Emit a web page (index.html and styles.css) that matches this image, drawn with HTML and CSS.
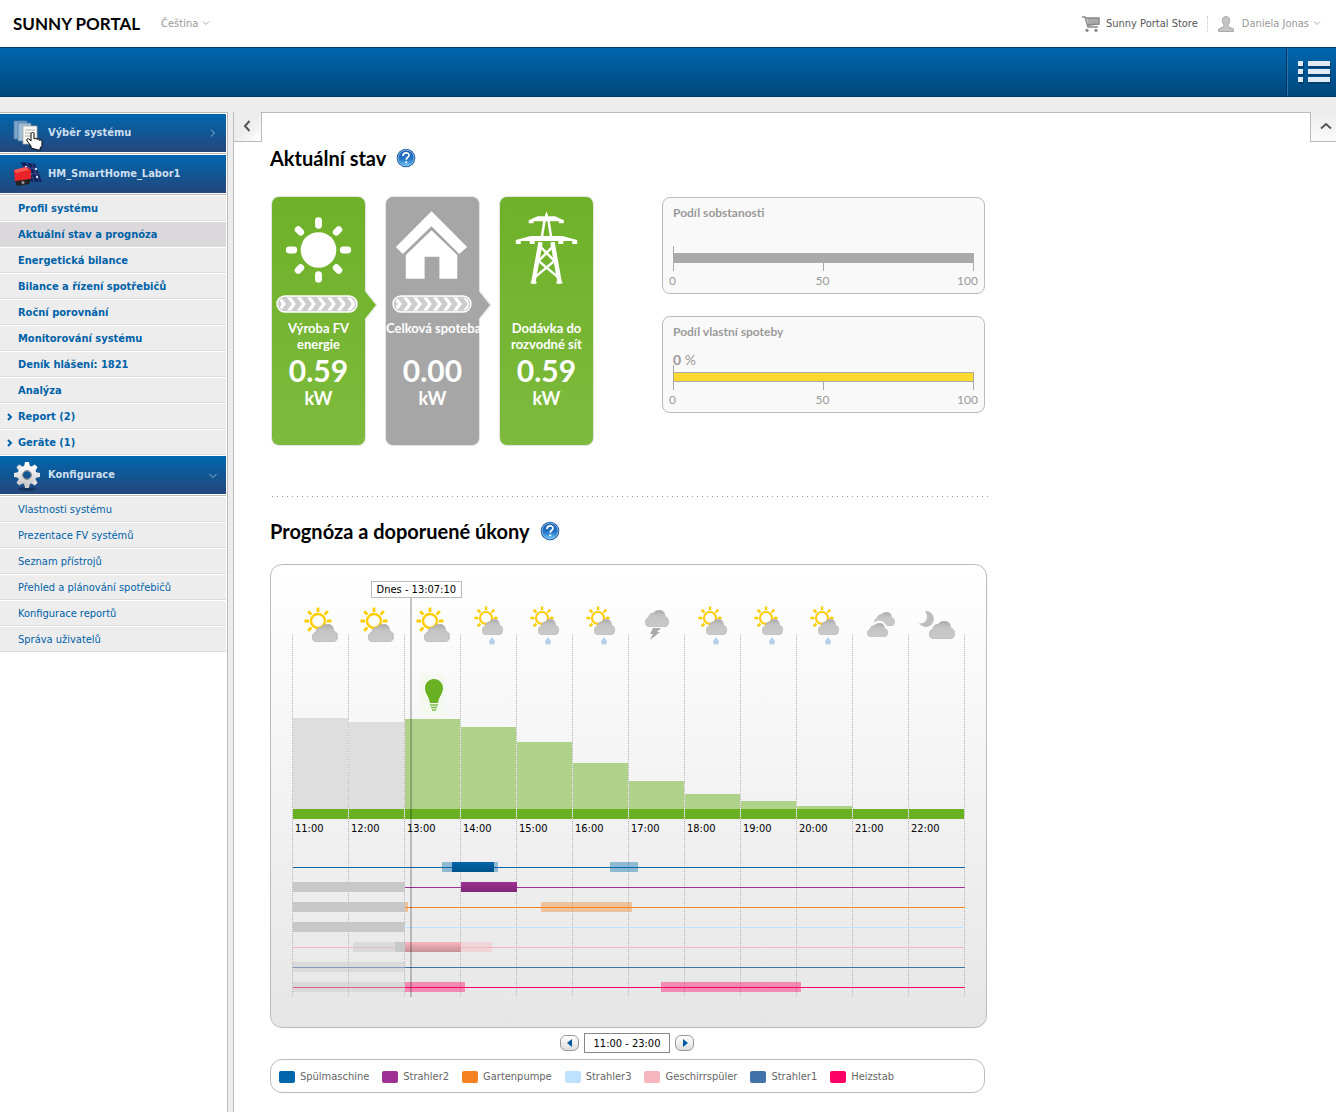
FILE: index.html
```html
<!DOCTYPE html>
<html lang="cs">
<head>
<meta charset="utf-8">
<meta name="viewport" content="width=device-width, initial-scale=1">
<title>Sunny Portal</title>
<link rel="stylesheet" href="styles.css">
</head>
<body>
<svg class="defs" aria-hidden="true">
  <defs>
    <linearGradient id="cloud-fill" x1="0" y1="0" x2="0" y2="1"><stop offset="0" stop-color="#ababab"/><stop offset=".35" stop-color="#c4c4c4"/><stop offset="1" stop-color="#cacaca"/></linearGradient>
    <linearGradient id="help-fill" x1="0" y1="0" x2="0" y2="1"><stop offset="0" stop-color="#1d5fb0"/><stop offset=".55" stop-color="#2273c4"/><stop offset="1" stop-color="#6cc3f5"/></linearGradient>
    <linearGradient id="gear-fill" x1="0" y1="0" x2="0" y2="1"><stop offset="0" stop-color="#fff"/><stop offset="1" stop-color="#c9c9c9"/></linearGradient>
    <symbol id="cloud" viewBox="0 0 26 18" preserveAspectRatio="none"><path fill="url(#cloud-fill)" stroke="#aaa" stroke-width=".6" d="M5 17.700C2 17.700.3 16 .3 13 .3 10.500 2 8.500 4 8 4 5 6.500 3 9 3.500 10.500 1.500 12.500.3 15.500.3 19.500.3 22 3 21.500 7 24 7.500 25.700 9.500 25.700 12.500 25.700 15.500 24 17.700 21 17.700Z"/></symbol>
    <symbol id="sun" viewBox="-14 -14 28 28"><g fill="none" stroke="#ffcd00" stroke-width="2.400"><circle r="7"/><path stroke-width="2.800" d="M0-13.500V-9M0 9V13.500M-13.500 0H-9M9 0H13.500M-9.800-9.800-6.600-6.600M9.800-9.800 6.600-6.600M-9.800 9.800-6.600 6.600M9.800 9.800 6.600 6.600"/></g></symbol>
    <symbol id="w-partly" viewBox="0 0 56 44"><use href="#sun" x="12" y="4" width="28" height="28"/><use href="#cloud" x="20" y="21" width="26" height="18"/></symbol>
    <symbol id="w-shower" viewBox="0 0 56 44"><use href="#sun" x="14" y="3" width="24" height="24"/><use href="#cloud" x="22" y="16" width="21" height="16"/><path fill="#b5d2ea" d="M32 34c1 2 3 3 3 5a3 2.600 0 0 1-6 0c0-2 2-3 3-5z"/></symbol>
    <symbol id="w-storm" viewBox="0 0 56 44"><use href="#cloud" x="17" y="7" width="24" height="17"/><path fill="#aaa" d="M25 25h8l-4 4h3l-10 8 3-6h-3z"/></symbol>
    <symbol id="w-cloudy" viewBox="0 0 56 44"><use href="#cloud" x="22" y="9" width="21" height="14"/><path fill="#fafafa" d="M20 22c2-4 10-7 14 0l4 3v4H20z"/><use href="#cloud" x="15" y="20" width="21" height="14"/></symbol>
    <symbol id="w-night" viewBox="0 0 56 44"><path fill="#bdbdbd" d="M17 8a8 8 0 1 1-6 12c6 2 11-5 6-12z"/><use href="#cloud" x="21" y="18" width="26" height="18"/></symbol>
    <symbol id="help" viewBox="0 0 20 20"><circle cx="10" cy="10" r="9.300" fill="#1c58a0"/><circle cx="10" cy="10" r="8" fill="url(#help-fill)" stroke="#9cc9ee" stroke-width=".8"/><path fill="none" stroke="#fff" stroke-width="1.700" d="M7 8c0-4 6-4 6-.8 0 2-2.800 2.200-2.800 4.600"/><circle cx="10.200" cy="14.300" r="1.100" fill="#fff"/></symbol>
    <pattern id="chevrons" y="2.500" width="10" height="13" patternUnits="userSpaceOnUse"><path fill="#fff" d="M1 0h4l5 6.500L5 13H1l5-6.500z"/></pattern>
  </defs>
</svg>

<header class="top">
  <a class="logo" href="#">SUNNY PORTAL</a>
  <button class="drop" type="button">Čeština <svg width="8" height="5" viewBox="0 0 8 5"><path d="M1 .5 4 3.500 7 .5"/></svg></button>
  <nav class="top-links">
    <a class="store" href="#"><svg width="18" height="16" viewBox="0 0 18 16"><path fill="#aaa" d="M5 2h12v6L6 10z"/><path fill="none" stroke="#888" stroke-width="1.500" d="M0 1h3l3 10h10M5.500 9 17 8V2H4"/><circle cx="5" cy="14.300" r="1.600" fill="#888"/><circle cx="14" cy="14.300" r="1.600" fill="#888"/></svg>Sunny Portal Store</a>
    <button class="drop user" type="button"><svg class="person" width="16" height="16" viewBox="0 0 16 16"><path fill="#c4c4c4" stroke="#aaa" d="M.5 15.500v-2.500l5.500-2.500V9C4.500 7 4 5 4.500 3 5-.2 11-.2 11.500 3c.5 2 0 4-1.500 6v1.500l5.500 2.500v2.500z"/></svg>Daniela Jonas <svg width="8" height="5" viewBox="0 0 8 5"><path d="M1 .5 4 3.500 7 .5"/></svg></button>
  </nav>
</header>
<div class="bar">
  <button class="bar-menu" type="button" aria-label="Menu"><svg width="34" height="24" viewBox="0 0 34 24"><path fill="#013e70" d="M2 3h5v5H2zM12 3h22v5H12zM2 11h5v5H2zM12 11h22v5H12zM2 19h5v5H2zM12 19h22v5H12z"/><path fill="#dfeaf5" d="M1 1h5v5H1zM11 1h22v5H11zM1 9h5v5H1zM11 9h22v5H11zM1 17h5v5H1zM11 17h22v5H11z"/></svg></button>
</div>

<div class="body">
  <nav class="side">
    <a class="head" href="#"><svg width="36" height="36" viewBox="0 0 36 36"><g stroke="#4d7ca8" stroke-width=".8"><path fill="#7da6c9" d="M5 6h13v18H5z"/><path fill="#9fbdd5" d="M9 8h13v18H9z"/><path fill="#fafaf5" stroke="#aaa" d="M14 11h14v18H14z"/></g><path stroke="#aaa" d="M16 15h10M16 18h10M16 21h8"/><path fill="#fff" stroke="#000" d="M22 33v-2l-4-5c-1-2 1-3 2-2l2 2v-7c0-2 3-2 3 0v5c1-1 3-1 3 .5 1-1 2.500-.5 2.500.8 1-.8 2.500 0 2.500 1.200v4l-2 3v2z"/></svg><span>Výběr systému</span><svg class="head-arrow" width="8" height="8" viewBox="0 0 8 8"><path d="M2 .5 5.500 4 2 7.500"/></svg></a>
    <a class="head" href="#"><svg width="36" height="36" viewBox="0 0 36 36"><path fill="#15235c" d="M12 6l14 2 7 18-15-1z"/><path stroke="#4d62a8" stroke-width=".6" fill="none" d="M13 11l15 2M15 17l15 1M18 7l7 18M23 8l7 17"/><circle cx="17" cy="11" r="1.200" fill="#cfe2ff"/><circle cx="27" cy="13" r="1.200" fill="#cfe2ff"/><circle cx="28" cy="21" r="1.200" fill="#cfe2ff"/><path fill="#e8232a" d="M5 14l12-3 5 3v9l-16 3z"/><path fill="#f55" d="M5 14l12-3 3 3-13 3z"/><path fill="#222" d="M6 25l16-2-2 5-12 2z"/><circle cx="14" cy="26.500" r="1.500" fill="#999"/></svg><span>HM_SmartHome_Labor1</span></a>
    <ul class="menu strong">
      <li><a href="#">Profil systému</a></li>
      <li class="on"><a href="#">Aktuální stav a prognóza</a></li>
      <li><a href="#">Energetická bilance</a></li>
      <li><a href="#">Bilance a řízení spotřebičů</a></li>
      <li><a href="#">Roční porovnání</a></li>
      <li><a href="#">Monitorování systému</a></li>
      <li><a href="#">Deník hlášení: 1821</a></li>
      <li><a href="#">Analýza</a></li>
      <li class="sub"><a href="#"><svg width="6" height="8" viewBox="0 0 6 8"><path d="M1 1l3 3-3 3"/></svg>Report (2)</a></li>
      <li class="sub"><a href="#"><svg width="6" height="8" viewBox="0 0 6 8"><path d="M1 1l3 3-3 3"/></svg>Geräte (1)</a></li>
    </ul>
    <a class="head" href="#"><svg width="36" height="36" viewBox="-18 -18 36 36"><ellipse cy="14" rx="9" ry="2" fill="#153560"/><g fill="url(#gear-fill)"><path id="teeth" d="M-2-13h4l1 5h-6zM-2 13h4l1-5h-6zM-13-2v4l5 1v-6zM13-2v4l-5 1v-6z"/><use href="#teeth" transform="rotate(45)"/><path fill-rule="evenodd" d="M0-9.500a9.500 9.500 0 1 0 .1 0zM0-4a4 4 0 1 1-.1 0z"/></g><circle r="4.500" fill="none" stroke="#888"/></svg><span>Konfigurace</span><svg class="head-arrow" width="8" height="8" viewBox="0 0 8 8"><path d="M.5 3 4 6.500 7.500 3"/></svg></a>
    <ul class="menu">
      <li><a href="#">Vlastnosti systému</a></li>
      <li><a href="#">Prezentace FV systémů</a></li>
      <li><a href="#">Seznam přístrojů</a></li>
      <li><a href="#">Přehled a plánování spotřebičů</a></li>
      <li><a href="#">Konfigurace reportů</a></li>
      <li><a href="#">Správa uživatelů</a></li>
    </ul>
  </nav>

  <main class="content">
    <button class="tab tab-left" type="button" aria-label="Skrýt menu"><svg width="8" height="12" viewBox="0 0 8 12"><path d="M6.500 1 2 6l4.500 5"/></svg></button>
    <button class="tab tab-right" type="button" aria-label="Nahoru"><svg width="12" height="8" viewBox="0 0 12 8"><path d="M1 6.500 6 2l5 4.500"/></svg></button>

    <div class="column">
      <h1>Aktuální stav <a href="#" aria-label="Nápověda"><svg width="20" height="20"><use href="#help"/></svg></a></h1>

      <section class="status">
        <article class="card green">
          <svg class="picture" width="94" height="96" viewBox="0 0 94 96"><g fill="#fff"><circle cx="47" cy="53" r="18"/><g stroke="#fff" stroke-width="7" stroke-linecap="round"><path d="M47 23.500v4.500M47 78v4.500M17.500 53H22M72 53h4.500M26.500 32.500l2.500 2.500M67.500 32.500 65 35M26.500 73.500l2.500-2.500M67.500 73.500 65 71"/></g></g></svg>
          <svg class="flow" width="82" height="18" viewBox="0 0 82 18"><rect x="1" y="1" width="80" height="16" rx="8" fill="#ccc"/><rect x="3" y="2.500" width="76" height="13" rx="6" fill="url(#chevrons)"/><rect x="1" y="1" width="80" height="16" rx="8" fill="none" stroke="#fff" stroke-width="1.400"/></svg>
          <h2>Výroba FV<br>energie</h2>
          <p class="value">0.59</p><p class="unit">kW</p>
          <svg class="tip" width="14" height="30" viewBox="0 0 14 30"><path fill="#74b52e" d="M0 0 12 15 0 30z"/><path fill="none" stroke="#e4e4e4" d="M1 0 13 15 1 30"/></svg>
        </article>
        <article class="card grey">
          <svg class="picture" width="94" height="96" viewBox="0 0 94 96"><path fill="#fff" d="M46 14 82 50l-8 7L46 29 17 57l-7-7zM46 33l26 25v24H54V60H39v22H20V58z"/></svg>
          <svg class="flow" width="80" height="18" viewBox="0 0 80 18"><rect x="1" y="1" width="78" height="16" rx="8" fill="#ccc"/><rect x="3" y="2.500" width="74" height="13" rx="6" fill="url(#chevrons)"/><rect x="1" y="1" width="78" height="16" rx="8" fill="none" stroke="#fff" stroke-width="1.400"/></svg>
          <h2>Celková spoteba<br>&nbsp;</h2>
          <p class="value">0.00</p><p class="unit">kW</p>
          <svg class="tip" width="14" height="30" viewBox="0 0 14 30"><path fill="#a6a6a6" d="M0 0 12 15 0 30z"/><path fill="none" stroke="#e4e4e4" d="M1 0 13 15 1 30"/></svg>
        </article>
        <article class="card green">
          <svg class="picture" width="94" height="96" viewBox="0 0 94 96"><g fill="none" stroke="#fff" stroke-width="3"><path d="M45.500 20 42 42M48.500 20 52 42" stroke-width="2.500"/><path d="M41 45 33.500 87M53 45 60.500 87" stroke-width="4.500"/><path d="M41 50 55 64 36 80M53 50 39 64 58 80" stroke-width="2.500"/></g><path fill="#fff" d="M45.500 18l1.500-4 1.500 4v1h7l9 4v3h-5v-2H34v2h-5v-3l9-4h7.500zM31 39h32l15 4v4h-5v-3H64v3h-5v-3H35v3h-5v-3H21v3h-5v-4zM31 85h6v2h-6zM57 85h6v2h-6z"/></svg>
          <div class="flow-space"></div>
          <h2>Dodávka do<br>rozvodné sít</h2>
          <p class="value">0.59</p><p class="unit">kW</p>
        </article>

        <div class="gauges">
          <section class="gauge">
            <h3>Podíl sobstanosti</h3>
            <p class="percent"></p>
            <div class="track"></div>
            <div class="scale"><span>0</span><span>50</span><span>100</span></div>
          </section>
          <section class="gauge yellow">
            <h3>Podíl vlastní spoteby</h3>
            <p class="percent"><b>0</b> %</p>
            <div class="track"></div>
            <div class="scale"><span>0</span><span>50</span><span>100</span></div>
          </section>
        </div>
      </section>

      <hr>

      <h1>Prognóza a doporuené úkony <a href="#" aria-label="Nápověda"><svg width="20" height="20"><use href="#help"/></svg></a></h1>

      <section class="forecast">
        <div class="plot">
          <div class="lines"><i></i><i></i><i></i><i></i><i></i><i></i><i></i><i></i><i></i><i></i><i></i><i></i></div>
          <div class="layers">
            <div class="weather">
              <svg><use href="#w-partly"/></svg><svg><use href="#w-partly"/></svg><svg><use href="#w-partly"/></svg>
              <svg><use href="#w-shower"/></svg><svg><use href="#w-shower"/></svg><svg><use href="#w-shower"/></svg>
              <svg><use href="#w-storm"/></svg>
              <svg><use href="#w-shower"/></svg><svg><use href="#w-shower"/></svg><svg><use href="#w-shower"/></svg>
              <svg><use href="#w-cloudy"/></svg><svg><use href="#w-night"/></svg>
            </div>
            <div class="bars">
              <div class="past" style="--h:91"></div>
              <div class="past" style="--h:87"></div>
              <div style="--h:90"><svg class="bulb" width="24" height="40" viewBox="0 0 24 40"><path fill="#f4f9f0" d="M0 0h24v40H0z"/><path fill="#69b023" d="M13 4c-5 0-9 4-9 9 0 6 4 8 5 15h8c1-7 5-9 5-15 0-5-4-9-9-9z"/><path stroke="#7db94a" stroke-width="1.500" d="M9 30h8M10 32.500h6M11 35h4"/></svg></div>
              <div style="--h:82"></div>
              <div style="--h:67"></div>
              <div style="--h:46"></div>
              <div style="--h:28"></div>
              <div style="--h:15"></div>
              <div style="--h:8"></div>
              <div style="--h:3"></div>
              <div style="--h:0"></div>
              <div style="--h:0"></div>
            </div>
            <div class="hours"><span>11:00</span><span>12:00</span><span>13:00</span><span>14:00</span><span>15:00</span><span>16:00</span><span>17:00</span><span>18:00</span><span>19:00</span><span>20:00</span><span>21:00</span><span>22:00</span></div>
            <div class="lanes">
              <div class="lane c1"><i class="plan" style="--from:160;--for:60"></i><i class="run" style="--from:170;--for:45"></i><i class="plan" style="--from:340;--for:30"></i></div>
              <div class="lane c2"><i class="done" style="--from:0;--for:120"></i><i class="run" style="--from:180;--for:60"></i></div>
              <div class="lane c3"><i class="done" style="--from:0;--for:120"></i><i class="plan" style="--from:120;--for:3"></i><i class="plan" style="--from:266;--for:97"></i></div>
              <div class="lane c4"><i class="done" style="--from:0;--for:120"></i></div>
              <div class="lane c5"><i class="missed" style="--from:64;--for:45"></i><i class="done" style="--from:109;--for:11"></i><i class="run" style="--from:120;--for:60"></i><i class="plan" style="--from:180;--for:33"></i></div>
              <div class="lane c6"><i class="missed" style="--from:0;--for:120"></i></div>
              <div class="lane c7"><i class="missed" style="--from:0;--for:120"></i><i class="plan" style="--from:120;--for:64"></i><i class="plan" style="--from:394;--for:150"></i></div>
            </div>
          </div>
          <div class="now"><span>Dnes - 13:07:10</span></div>
        </div>
      </section>

      <div class="pager">
        <button type="button" aria-label="Předchozí"><svg width="6" height="8" viewBox="0 0 6 8"><path fill="#0058a0" d="M5 0v8L0 4z"/></svg></button>
        <input type="text" value="11:00 - 23:00" aria-label="Časový úsek" readonly>
        <button type="button" aria-label="Další"><svg width="6" height="8" viewBox="0 0 6 8"><path fill="#0058a0" d="M1 0v8l5-4z"/></svg></button>
      </div>

      <ul class="legend">
        <li class="c1">Spülmaschine</li><li class="c2">Strahler2</li><li class="c3">Gartenpumpe</li><li class="c4">Strahler3</li><li class="c5">Geschirrspüler</li><li class="c6">Strahler1</li><li class="c7">Heizstab</li>
      </ul>
    </div>
  </main>
</div>
</body>
</html>
```
FILE: styles.css
```css
* { box-sizing: border-box; }

body {
  margin: 0;
  min-height: 100vh;
  display: flex;
  flex-direction: column;
  background: #ededed;
  color: #000;
  font: 11px/16px "DejaVu Sans Condensed", "Noto Sans", sans-serif;
}

h1, h2, h3, p, ul { margin: 0; padding: 0; }
ul { list-style: none; }
a { color: inherit; text-decoration: none; }
svg { display: block; flex: none; }
button { margin: 0; padding: 0; border: 0; background: none; color: inherit; font: inherit; cursor: pointer; }
.defs { position: absolute; width: 0; height: 0; }

/* Top line */
.top {
  display: flex;
  align-items: center;
  height: 47px;
  padding: 0 15px 0 13px;
  background: #fff;
}
.logo { font: 700 17px/24px Lato, sans-serif; }
.drop { display: flex; align-items: center; gap: 4px; margin-left: 21px; color: #999; }
.drop svg { fill: none; stroke: #aaa; }
.top-links { display: flex; align-items: center; margin-left: auto; }
.store { display: flex; align-items: center; gap: 6px; padding-right: 9px; border-right: 1px dotted #ccc; color: #555; }
.user { margin-left: 10px; }
.user .person { margin-right: 4px; }

/* Blue bar */
.bar {
  display: flex;
  justify-content: flex-end;
  height: 50px;
  border: solid #003e6e;
  border-width: 1px 0;
  background: linear-gradient(#0067ae, #00477c);
}
.bar-menu { width: 50px; padding-left: 10px; border-left: 1px solid #00335c; box-shadow: inset 1px 0 #2476b3; }

/* Columns under the bar */
.body { flex: 1; display: grid; grid-template-columns: 228px 1fr; column-gap: 5px; padding-top: 15px; }

.side { border: solid #bbb; border-width: 1px 1px 0 0; padding-right: 1px; background: #fff; }
.head {
  display: flex;
  align-items: center;
  height: 40px;
  margin-top: 1px;
  padding: 0 9px 2px;
  border-bottom: 1px solid #bbb;
  background: linear-gradient(#0067ae, #24467b) 0 0 / 100% 38px no-repeat;
  color: #cddfee;
  font-weight: 700;
}
.head span { flex: 1; padding-left: 3px; }
.head-arrow { fill: none; stroke: #8db4d6; }
.menu li { height: 26px; border: solid #fff; border-width: 1px 0 0; background: #ededed; box-shadow: inset 0 -1px #ddd; }
.menu .on { background: #dad8da; }
.menu a { display: flex; align-items: center; height: 26px; padding-left: 18px; color: #0062a8; }
.menu .sub a { padding-left: 7px; gap: 5px; }
.menu .sub svg { fill: none; stroke: #0062a8; stroke-width: 2; }
.strong { font-weight: 700; }

.content { position: relative; border: solid #bbb; border-width: 1px 0 0 1px; padding: 32px 36px 19px; background: #fff; }
.tab {
  position: absolute;
  top: -1px;
  display: grid;
  place-items: center;
  height: 30px;
  padding-bottom: 2px;
  border-bottom: 1px solid #bbb;
  background: linear-gradient(135deg, #ededed 50%, #fff);
}
.tab svg { fill: none; stroke: #555; stroke-width: 2; }
.tab-left { left: 0; width: 28px; padding-right: 2px; border-right: 1px solid #bbb; }
.tab-right { right: 0; width: 26px; padding-left: 4px; border-left: 1px solid #bbb; background: linear-gradient(#ededed, #fafafa); }

.column { max-width: 717px; }
h1 { display: flex; align-items: center; gap: 10px; height: 26px; font: 700 20px/26px Lato, sans-serif; }

/* Status cards */
.status { display: flex; gap: 19px; margin: 25px 0 50px; padding-left: 1px; }
.card {
  position: relative;
  flex: 0 0 95px;
  min-width: 0;
  height: 250px;
  border: 1px solid #e4e4e4;
  border-radius: 8px;
  color: #fff;
  font-family: Lato, sans-serif;
  text-align: center;
}
.green { background: linear-gradient(#6fb129, #7dba3d); }
.grey { background: #a6a6a6; }
.picture { width: 100%; }
.flow { margin: 2px auto 7px 4px; }
.grey .flow { margin-left: 6px; }
.flow-space { height: 27px; }
.card h2 { font-size: 13px; line-height: 16px; white-space: nowrap; }
.value { font-size: 30px; font-weight: 700; line-height: 36px; }
.unit { font-size: 18px; font-weight: 700; line-height: 20px; }
.tip { position: absolute; left: 92px; top: 93px; }

.gauges { flex: 1; display: flex; flex-direction: column; gap: 22px; margin: 1px 2px 0 49px; }
.gauge {
  height: 97px;
  padding: 7px 10px;
  border: 1px solid #bbb;
  border-radius: 8px;
  background: #f9f9f9;
  color: #999;
  font-family: Lato, sans-serif;
}
.gauge h3 { font-size: 12px; line-height: 16px; }
.percent { height: 32px; padding-top: 14px; font-size: 14px; line-height: 12px; }
.track {
  position: relative;
  height: 10px;
  border: 1px solid #aaa;
  background: #a9a9a9;
}
.track::before { content: ""; position: absolute; left: -1px; bottom: 100%; width: 1px; height: 8px; background: #aaa; }
.yellow .track { background: #fbd92e; }
.scale {
  display: flex;
  justify-content: space-between;
  margin: 0 -4px;
  padding-top: 11px;
  background:
    linear-gradient(#aaa, #aaa) 4px 0 / 1px 8px no-repeat,
    linear-gradient(#aaa, #aaa) 50% 0 / 1px 8px no-repeat,
    linear-gradient(#aaa, #aaa) calc(100% - 4px) 0 / 1px 8px no-repeat;
  font-size: 12px;
  line-height: 14px;
}
.scale span:nth-child(2) { padding-left: 12px; }

hr { height: 1px; margin: 0 -2px 21px 0; border: 0; background: repeating-linear-gradient(90deg, transparent 0 2px, #999 2px 3px, transparent 3px 5px); }

/* Forecast chart */
.forecast { margin-top: 20px; padding: 38px 22px 30px 21px; border: 1px solid #bbb; border-radius: 12px; background: linear-gradient(#fff, #e6e6e6); }
.plot { position: relative; display: grid; }
.plot > .lines, .plot > .layers { grid-area: 1 / 1; }
.lines, .weather, .bars, .hours { display: grid; grid-template-columns: repeat(12, 1fr); }
.lines { margin-top: 32px; }
.lines i { background: repeating-linear-gradient(#b5b5b5 0 1px, transparent 1px 2px) 0 0 / 1px 100% no-repeat; }
.lines i:last-child {
  margin-right: -1px;
  background:
    repeating-linear-gradient(#b5b5b5 0 1px, transparent 1px 2px) 0 0 / 1px 100% no-repeat,
    repeating-linear-gradient(#b5b5b5 0 1px, transparent 1px 2px) 100% 0 / 1px 100% no-repeat;
}
.weather svg { width: 100%; height: 44px; }
.bars { align-items: end; height: 172px; }
.bars div { position: relative; height: calc(10px + var(--h) * 1px); margin-left: 1px; border-bottom: 10px solid #69b023; background: #aed28a; }
.bars .past { background: #dedede; }
.bulb { position: absolute; left: 16px; bottom: 94px; }
.hours { padding-top: 1px; line-height: 18px; }
.hours span { padding-left: 3px; }
.lanes { margin: 19px -1px 0 1px; }
.lane { position: relative; height: 20px; background: linear-gradient(var(--c), var(--c)) 0 10px / 100% 1px no-repeat; }
.lane i { position: absolute; top: 5px; left: calc(var(--from) / 720 * 100%); width: calc(var(--for) / 720 * 100%); height: 10px; }
.run { background: linear-gradient(transparent, rgba(0, 0, 0, .2)) var(--c); }
.plan { background: var(--c); opacity: .4; }
.done { background: #c8c8c8; }
.missed { background: #c8c8c8; opacity: .45; }
.now { position: absolute; top: -5px; bottom: 0; left: calc(126 / 720 * 100%); width: 2px; background: rgba(0, 0, 0, .22); }
.now span { position: absolute; bottom: 100%; left: -39px; padding: 0 5px; border: 1px solid #bbb; background: #fff; line-height: 15px; white-space: nowrap; }

.c1 { --c: #0066ab; }
.c2 { --c: #9e3193; }
.c3 { --c: #f58220; }
.c4 { --c: #bde1ff; }
.c5 { --c: #f7b5be; }
.c6 { --c: #4173a8; }
.c7 { --c: #ff0066; }

.pager { display: flex; justify-content: center; align-items: center; gap: 5px; margin: 5px 3px 6px 0; }
.pager button { display: grid; place-items: center; width: 19px; height: 16px; border: 1px solid #999; border-radius: 6px; background: linear-gradient(#fff, #ddd); }
.pager input { width: 86px; height: 20px; padding: 0; border: 1px solid #888; background: #fff; font: inherit; text-align: center; }

.legend { display: flex; align-items: center; gap: 13px; height: 34px; margin-right: 2px; padding: 2px 0 0 8px; border: 1px solid #bbb; border-radius: 12px; color: #666; }
.legend li { display: flex; align-items: center; gap: 5px; white-space: nowrap; }
.legend li::before { content: ""; width: 16px; height: 12px; border-radius: 2px; background: var(--c); }
```
